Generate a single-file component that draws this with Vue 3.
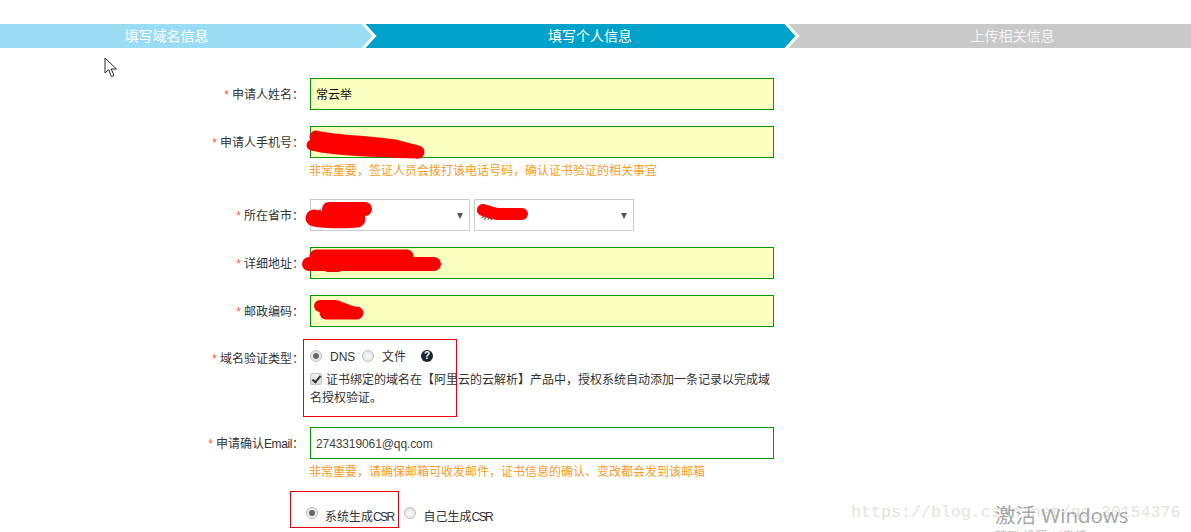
<script setup>
const steps = [
  { label: '填写域名信息', cls: 'done' },
  { label: '填写个人信息', cls: 'current' },
  { label: '上传相关信息', cls: 'todo' },
]
const scribbles = [
  { d: 'M316 137 C340 142 370 142 395 146 L418 152', w: 13 },
  { d: 'M312 145 C340 151 380 152 418 153', w: 11 },
  { d: 'M329 209 L365 209', w: 14 },
  { d: 'M314 218 C325 220 345 220 357 219', w: 17 },
  { d: 'M483 210 L497 214 L522 214', w: 12 },
  { d: 'M316 256 L407 256', w: 13 },
  { d: 'M309 264 L434 264', w: 14 },
  { d: 'M328 268 L338 268', w: 8 },
  { d: 'M320 306 L336 306 L352 312', w: 12 },
  { d: 'M326 313 L357 313', w: 13 },
]
</script>

<template>
  <div class="page">
    <div class="steps">
      <div v-for="s in steps" :key="s.label" class="step" :class="s.cls">
        <span>{{ s.label }}</span>
        <svg v-if="s.cls !== 'todo'" class="tip" width="16" height="24" viewBox="0 0 16 24">
          <path class="tip-fill" d="M0 0 L1 0 L12 12 L1 24 L0 24 Z" />
          <path d="M0.5 -1 L12.5 12 L0.5 25" fill="none" stroke="#fff" stroke-width="3" />
        </svg>
      </div>
    </div>

    <form class="form" @submit.prevent>
      <div class="row">
        <label class="label"><i>*</i>申请人姓名：</label>
        <input class="field filled" value="常云举" readonly />
      </div>

      <div class="row">
        <label class="label"><i>*</i>申请人手机号：</label>
        <input class="field filled" readonly />
      </div>
      <p class="hint">非常重要，签证人员会拨打该电话号码，确认证书验证的相关事宜</p>

      <div class="row">
        <label class="label"><i>*</i>所在省市：</label>
        <div class="selects">
          <div class="select-wrap"><select class="select"><option>省份</option></select></div>
          <div class="select-wrap"><select class="select"><option>城市</option></select></div>
        </div>
      </div>

      <div class="row">
        <label class="label"><i>*</i>详细地址：</label>
        <input class="field filled" readonly />
      </div>

      <div class="row">
        <label class="label"><i>*</i>邮政编码：</label>
        <input class="field filled" readonly />
      </div>

      <div class="row top">
        <label class="label type-label"><i>*</i>域名验证类型：</label>
        <div class="type-box">
          <div class="radios">
            <input type="radio" class="radio" name="verify" checked />
            <span class="dns">DNS</span>
            <input type="radio" class="radio file" name="verify" />
            <span class="file-text">文件</span>
            <span class="help">?</span>
          </div>
          <p class="auto">
            <input type="checkbox" class="check" checked />证书绑定的域名在【阿里云的云解析】产品中，授权系统自动添加一条记录以完成域名授权验证。
          </p>
        </div>
      </div>

      <div class="row">
        <label class="label"><i>*</i>申请确认<span class="email">Email</span>：</label>
        <input class="field mail" value="2743319061@qq.com" readonly />
      </div>
      <p class="hint">非常重要，请确保邮箱可收发邮件，证书信息的确认、变改都会发到该邮箱</p>

      <div class="csr">
        <input type="radio" class="radio" name="csr" checked />
        <span class="csr-one">系统生成<span class="latin">CSR</span></span>
        <input type="radio" class="radio" name="csr" />
        <span class="csr-two">自己生成<span class="latin">CSR</span></span>
      </div>
    </form>

    <svg class="cursor" width="16" height="22" viewBox="0 0 16 22">
      <path d="M1 1 L1 16 L4.6 12.8 L7.4 19.6 L10 18.4 L7.2 12 L12.4 12 Z" fill="#fff" stroke="#23262b" stroke-width="1" />
    </svg>

    <svg class="scribbles" width="1191" height="532" viewBox="0 0 1191 532">
      <path
        v-for="(s, i) in scribbles"
        :key="i"
        :d="s.d"
        :stroke-width="s.w"
        fill="none"
        stroke="#ff0000"
        stroke-linecap="round"
        stroke-linejoin="round"
      />
    </svg>

    <div class="mark mark-type"></div>
    <div class="mark mark-csr"></div>

    <div class="watermark">https://blog.csdn.net/qq_30154376</div>
    <div class="activate">激活 Windows</div>
    <div class="activate-sub">转到“设置”以激活 Windows。</div>
  </div>
</template>

<style>
html, body { margin: 0; background: #fff; }
</style>

<style scoped>
.page {
  position: relative;
  width: 1191px;
  height: 532px;
  overflow: hidden;
  padding-top: 24px;
  box-sizing: border-box;
  background: #fff;
  font-family: "Liberation Sans", "Noto Sans CJK SC", sans-serif;
  font-size: 12px;
  color: #333;
}

.steps { display: flex; height: 24px; }
.step {
  position: relative;
  box-sizing: border-box;
  display: flex;
  align-items: center;
  justify-content: center;
  color: #fff;
  font-size: 14px;
  line-height: 24px;
}
.step.done { width: 365px; padding-right: 32px; background: #9bdcf5; z-index: 2; }
.step.current { width: 423px; padding-left: 27px; background: #00a2ca; z-index: 1; }
.step.todo { width: 403px; padding-left: 46px; background: #c9c9c9; color: #f2f2f2; }
.tip { position: absolute; top: 0; left: 100%; margin-left: -3px; overflow: visible; }
.done .tip-fill { fill: #9bdcf5; }
.current .tip-fill { fill: #00a2ca; }

.form { display: block; margin: 30px 0 0; }
.row { display: flex; align-items: center; margin-bottom: 16px; }
.row.top { align-items: flex-start; }
.label {
  box-sizing: border-box;
  width: 304px;
  margin-right: 6px;
  padding-bottom: 2px;
  flex: none;
  text-align: right;
  color: #333;
  white-space: nowrap;
}
.label i { font-style: normal; color: #ff5a1f; margin-right: 3px; }
.type-label { line-height: 16px; margin-top: 8px; padding-bottom: 0; }
.email { letter-spacing: -0.4px; }

.field {
  box-sizing: border-box;
  width: 464px;
  height: 32px;
  padding: 0 5px 2px;
  border: 1px solid #009900;
  border-radius: 0;
  outline: none;
  font: inherit;
  color: #333;
}
.field.filled { background: #fbffbf; color: #111; }
.field.mail { background: #fff; color: #444; padding: 1px 5px 0; letter-spacing: -0.1px; }

.hint {
  margin: -16px 0 16px 309px;
  height: 25px;
  line-height: 26px;
  color: #ff9a1f;
}

.selects { display: flex; gap: 4px; }
.select-wrap { position: relative; }
.select-wrap::after {
  content: "";
  position: absolute;
  right: 7px;
  top: 14px;
  border-left: 3px solid transparent;
  border-right: 3px solid transparent;
  border-top: 6px solid #555;
}
.select {
  display: block;
  box-sizing: border-box;
  width: 160px;
  height: 32px;
  padding: 0 6px;
  border: 1px solid #ccc;
  border-radius: 0;
  background: #fff;
  appearance: none;
  font: inherit;
  color: #333;
}

.type-box { width: 464px; height: 68px; }
.radios { display: flex; align-items: center; height: 25px; }
.dns { margin-left: 8px; margin-top: 3px; width: 32px; line-height: 16px; }
.file-text { margin-left: 8px; margin-top: 3px; line-height: 16px; }
.help {
  width: 12px;
  height: 12px;
  margin-left: 15px;
  border-radius: 50%;
  background: #1e2530;
  color: #fff;
  font-size: 10px;
  font-weight: bold;
  line-height: 12px;
  text-align: center;
}
.auto { margin: 3px 0 0; line-height: 18px; color: #333; }

.radio {
  appearance: none;
  flex: none;
  box-sizing: border-box;
  width: 12px;
  height: 12px;
  margin: 0;
  border: 1px solid #bdbdbd;
  border-radius: 50%;
  background: radial-gradient(circle at 50% 60%, #fafafa 0, #e6e6e6 70%, #d0d0d0 100%);
  position: relative;
}
.radio:checked::after {
  content: "";
  position: absolute;
  left: 2px;
  top: 2px;
  width: 6px;
  height: 6px;
  border-radius: 50%;
  background: #666;
}
.check {
  appearance: none;
  box-sizing: border-box;
  display: inline-block;
  position: relative;
  vertical-align: -1px;
  width: 12px;
  height: 12px;
  margin: 0 4px 0 0;
  border: 1px solid #c4c4c4;
  border-radius: 2px;
  background: linear-gradient(#f0f0f0, #dcdcdc);
}
.check:checked::after {
  content: "";
  position: absolute;
  left: 3px;
  top: 0;
  width: 3px;
  height: 7px;
  border-right: 2px solid #333;
  border-bottom: 2px solid #333;
  transform: rotate(40deg);
}

.csr {
  display: flex;
  align-items: center;
  margin: 0 0 0 306px;
  padding-top: 3px;
  height: 20px;
}
.csr-one { margin-left: 7px; margin-top: 4px; }
.csr-one + .radio { margin-left: 10px; }
.csr-two { margin-left: 8px; margin-top: 4px; }
.latin { letter-spacing: -1.6px; }

.cursor { position: absolute; left: 104px; top: 57px; }
.scribbles { position: absolute; left: 0; top: 0; pointer-events: none; }

.mark { position: absolute; box-sizing: border-box; border: 1px solid #e8000b; pointer-events: none; }
.mark-type { left: 303px; top: 339px; width: 154px; height: 78px; }
.mark-csr { left: 290px; top: 491px; width: 109px; height: 37px; }

.watermark {
  position: absolute;
  left: 851px;
  top: 503px;
  font-family: "Liberation Mono", monospace;
  font-size: 16.65px;
  line-height: 20px;
  color: #e4e4de;
  white-space: nowrap;
}
.activate {
  position: absolute;
  left: 995px;
  top: 502px;
  font-family: "Open Sans", "Noto Sans CJK SC", sans-serif;
  font-size: 20.5px;
  line-height: 26px;
  color: #a6a6a6;
  white-space: nowrap;
}
.activate-sub {
  position: absolute;
  left: 995px;
  top: 529px;
  font-size: 12px;
  line-height: 16px;
  color: #c4c4c4;
  white-space: nowrap;
}
</style>
